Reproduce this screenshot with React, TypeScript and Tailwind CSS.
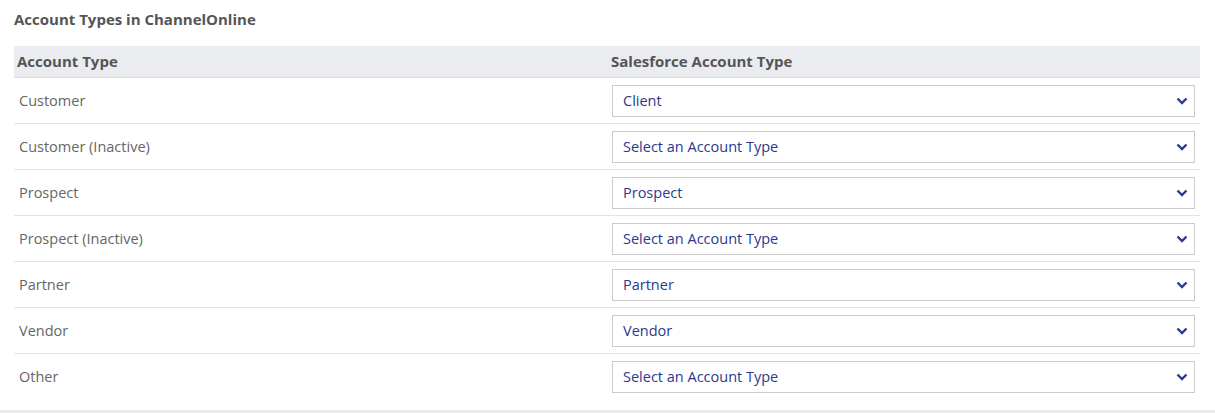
import React from "react";

const rows: { label: string; value: string }[] = [
  { label: "Customer", value: "Client" },
  { label: "Customer (Inactive)", value: "Select an Account Type" },
  { label: "Prospect", value: "Prospect" },
  { label: "Prospect (Inactive)", value: "Select an Account Type" },
  { label: "Partner", value: "Partner" },
  { label: "Vendor", value: "Vendor" },
  { label: "Other", value: "Select an Account Type" },
];

const Chevron = () => (
  <svg width="12" height="8" viewBox="0 0 12 8" className="shrink-0">
    <path d="M1.5 1.5 L6 6 L10.5 1.5" fill="none" stroke="#2b3990" strokeWidth="2.4" />
  </svg>
);

export default function App() {
  return (
    <div className="w-[1215px] h-[413px] bg-white font-['Open_Sans',sans-serif] text-[14.5px] flex flex-col">
      <div className="flex-1 px-[14px]">
        {/* title */}
        <h2 className="pt-[8px] h-[46px] text-[15px] font-bold text-[#555]">Account Types in ChannelOnline</h2>
        <div className="w-[1186px]">
          {/* header */}
          <div className="grid grid-cols-[597px_1fr] h-[32px] items-center bg-[#ebecf0] border-b border-[#dcdcdc] text-[15px] font-bold text-[#555]">
            <span className="pl-[3px]">Account Type</span>
            <span>Salesforce Account Type</span>
          </div>
          {rows.map((r, i) => (
            <div
              key={r.label}
              className={`grid grid-cols-[598px_1fr] h-[46px] items-center ${i < rows.length - 1 ? "border-b border-[#e2e2e2]" : ""}`}
            >
              <span className="pl-[5px] text-[#666]">{r.label}</span>
              <div className="w-[583px] h-[32px] border border-[#cccccc] flex items-center justify-between pl-[10px] pr-[6px] text-[#2b3990]">
                <span>{r.value}</span>
                <Chevron />
              </div>
            </div>
          ))}
        </div>
      </div>
      <div className="h-[3px] bg-[#ebebeb]" />
    </div>
  );
}
